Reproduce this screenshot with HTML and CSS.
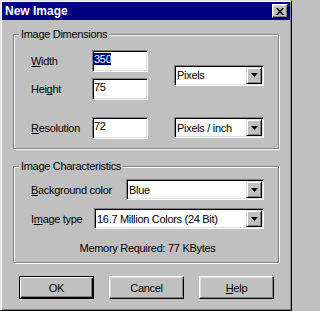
FILE: index.html
```html
<!DOCTYPE html>
<html>
<head>
<meta charset="utf-8">
<title>New Image</title>
<link rel="stylesheet" href="styles.css">
</head>
<body>
<div class="window">
  <div class="titlebar">
    <span class="title">New Image</span>
    <span class="close">
      <svg width="8" height="7" viewBox="0 0 8 7"><path d="M0 0h2l2 2.5L6 0h2L5 3.5 8 7H6L4 4.5 2 7H0l3-3.5z" fill="#000"/></svg>
    </span>
  </div>
  <div class="body">
    <fieldset class="group">
      <legend>Image Dimensions</legend>
      <div class="dims">
        <span class="lbl r1"><u>W</u>idth</span>
        <div class="field r1"><span class="sel">350</span></div>
        <span class="lbl r2">Hei<u>g</u>ht</span>
        <div class="field r2">75</div>
        <div class="combo units">
          <span>Pixels</span>
          <span class="arrow"><svg width="7" height="4" viewBox="0 0 7 4"><path d="M0 0h7L3.5 4z" fill="#000"/></svg></span>
        </div>
        <span class="lbl r3"><u>R</u>esolution</span>
        <div class="field r3">72</div>
        <div class="combo res">
          <span>Pixels / inch</span>
          <span class="arrow"><svg width="7" height="4" viewBox="0 0 7 4"><path d="M0 0h7L3.5 4z" fill="#000"/></svg></span>
        </div>
      </div>
    </fieldset>
    <fieldset class="group group2">
      <legend>Image Characteristics</legend>
      <div class="chars">
        <div class="row">
          <span class="lbl"><u>B</u>ackground color</span>
          <div class="combo bg">
            <span>Blue</span>
            <span class="arrow"><svg width="7" height="4" viewBox="0 0 7 4"><path d="M0 0h7L3.5 4z" fill="#000"/></svg></span>
          </div>
        </div>
        <div class="row row2">
          <span class="lbl">I<u>m</u>age type</span>
          <div class="combo type">
            <span>16.7 Million Colors (24 Bit)</span>
            <span class="arrow"><svg width="7" height="4" viewBox="0 0 7 4"><path d="M0 0h7L3.5 4z" fill="#000"/></svg></span>
          </div>
        </div>
        <div class="memory">Memory Required: 77 KBytes</div>
      </div>
    </fieldset>
    <div class="buttons">
      <button class="btn default">OK</button>
      <button class="btn">Cancel</button>
      <button class="btn"><u>H</u>elp</button>
    </div>
  </div>
</div>
</body>
</html>
```
FILE: styles.css
```css
* { box-sizing: border-box; }
html, body { margin: 0; padding: 0; }
body {
  width: 292px;
  height: 311px;
  background: #c0c0c0;
  font-family: "Liberation Sans", Arial, sans-serif;
  font-size: 11px;
  letter-spacing: -0.3px;
  color: #000;
}
u { text-decoration-skip-ink: none; }
.window {
  width: 292px;
  height: 311px;
  background: #c0c0c0;
  border: 1px solid;
  border-color: #dfdfdf #000 #000 #dfdfdf;
  box-shadow: inset 1px 1px #fff, inset -1px -1px #808080;
  padding: 1px;
  display: flex;
  flex-direction: column;
}
.titlebar {
  height: 18px;
  background: #000080;
  color: #fff;
  display: flex;
  align-items: center;
  justify-content: space-between;
  padding: 0 2px 0 3px;
  font-weight: bold;
  font-size: 12px;
  letter-spacing: 0;
}
.close {
  width: 16px;
  height: 14px;
  background: #c0c0c0;
  border: 1px solid;
  border-color: #fff #000 #000 #fff;
  box-shadow: inset -1px -1px #808080, inset 1px 1px #dfdfdf;
  display: flex;
  align-items: center;
  justify-content: center;
  padding-right: 1px;
}
.close svg { display: block; }
.body {
  padding: 7px 11px 0;
  display: flex;
  flex-direction: column;
}
fieldset.group {
  margin: 0;
  padding: 0;
  min-width: 0;
  border: 1px solid #808080;
  box-shadow: inset 1px 1px #fff, 1px 1px #fff;
}
fieldset.group legend {
  margin-left: 5px;
  padding: 0 2px;
  line-height: 14px;
  background: #c0c0c0;
}
fieldset.group2 { margin-top: 10px; }
.dims {
  display: grid;
  grid-template-columns: 61px 56px 26px 90px;
  grid-template-rows: 22px 6px 22px 17px 22px;
  padding: 9px 0 9px 17px;
}
.lbl { align-self: center; white-space: nowrap; }
.r1 { grid-row: 1; }
.r2 { grid-row: 3; }
.r3 { grid-row: 5; }
.lbl.r1, .lbl.r2, .lbl.r3 { grid-column: 1; }
.field.r1, .field.r2, .field.r3 { grid-column: 2; }
.field {
  background: #fff;
  border: 1px solid;
  border-color: #808080 #fff #fff #808080;
  box-shadow: inset 1px 1px #000, inset -1px -1px #dfdfdf;
  padding: 2px 1px 0 1px;
  line-height: 13px;
}
.sel { background: #000080; color: #fff; }
.combo {
  height: 21px;
  background: #fff;
  border: 1px solid;
  border-color: #808080 #fff #fff #808080;
  box-shadow: inset 1px 1px #000, inset -1px -1px #dfdfdf;
  display: flex;
  align-items: center;
  justify-content: space-between;
  padding: 1px 1px 1px 2px;
  white-space: nowrap;
}
.units { grid-column: 4; grid-row: 1 / 4; align-self: center; }
.res { grid-column: 4; grid-row: 5; align-self: start; }
.arrow {
  width: 16px;
  height: 17px;
  flex: none;
  background: #c0c0c0;
  border: 1px solid;
  border-color: #dfdfdf #000 #000 #dfdfdf;
  box-shadow: inset 1px 1px #fff, inset -1px -1px #808080;
  display: flex;
  align-items: center;
  justify-content: center;
}
.arrow svg { display: block; }
.chars {
  display: flex;
  flex-direction: column;
  padding: 6px 14px 7px 17px;
}
.row {
  display: flex;
  align-items: center;
  justify-content: space-between;
}
.row2 { margin-top: 8px; }
.bg { width: 138px; }
.type { width: 170px; }
.memory {
  margin-top: 12px;
  line-height: 14px;
  text-align: center;
}
.buttons {
  margin-top: 13px;
  display: flex;
  justify-content: center;
  gap: 15px;
  padding-left: 1px;
}
.btn {
  width: 75px;
  height: 23px;
  padding: 0;
  margin: 0;
  background: #c0c0c0;
  color: #000;
  font: inherit;
  letter-spacing: inherit;
  border: 1px solid;
  border-color: #fff #000 #000 #fff;
  box-shadow: inset -1px -1px #808080, inset 1px 1px #dfdfdf;
}
.btn.default {
  border-color: #000;
  box-shadow: inset 1px 1px #fff, inset -1px -1px #000, inset -2px -2px #808080;
}
```
